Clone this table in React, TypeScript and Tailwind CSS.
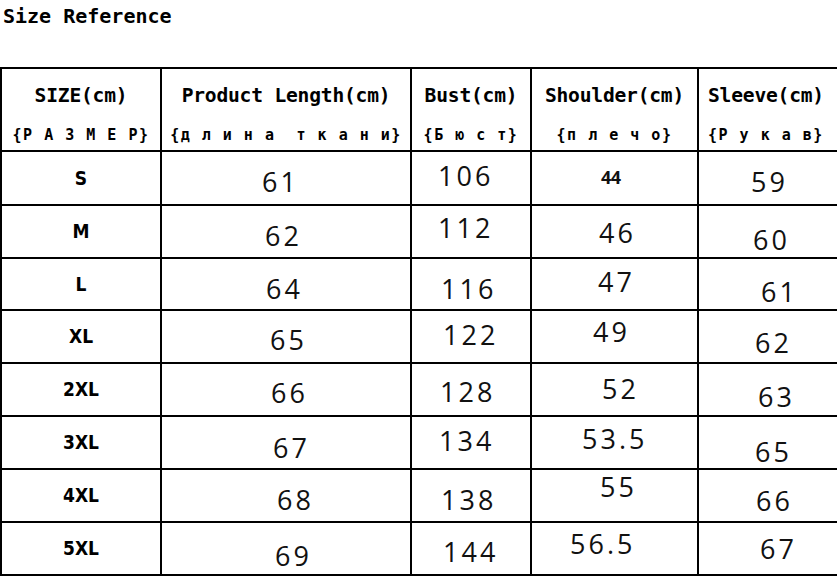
import React from "react";

type Cell = { t: string; c: string; small?: boolean };
type Row = { size: string; cells: Cell[] };

const rows: Row[] = [
  {
    size: "S",
    cells: [
      { t: "61", c: "pl-[100px] pt-[16px]" },
      { t: "106", c: "pl-[26px] pt-[10px]" },
      { t: "44", c: "pl-[69px] pt-[16px]", small: true },
      { t: "59", c: "pl-[52px] pt-[16px]" },
    ],
  },
  {
    size: "M",
    cells: [
      { t: "62", c: "pl-[103px] pt-[16px]" },
      { t: "112", c: "pl-[26px] pt-[8px]" },
      { t: "46", c: "pl-[67px] pt-[13px]" },
      { t: "60", c: "pl-[54px] pt-[20px]" },
    ],
  },
  {
    size: "L",
    cells: [
      { t: "64", c: "pl-[104px] pt-[16px]" },
      { t: "116", c: "pl-[29px] pt-[16px]" },
      { t: "47", c: "pl-[66px] pt-[9px]" },
      { t: "61", c: "pl-[62px] pt-[19px]" },
    ],
  },
  {
    size: "XL",
    cells: [
      { t: "65", c: "pl-[108px] pt-[15px]" },
      { t: "122", c: "pl-[31px] pt-[10px]" },
      { t: "49", c: "pl-[61px] pt-[7px]" },
      { t: "62", c: "pl-[56px] pt-[18px]" },
    ],
  },
  {
    size: "2XL",
    cells: [
      { t: "66", c: "pl-[109px] pt-[15px]" },
      { t: "128", c: "pl-[28px] pt-[14px]" },
      { t: "52", c: "pl-[70px] pt-[11px]" },
      { t: "63", c: "pl-[59px] pt-[19px]" },
    ],
  },
  {
    size: "3XL",
    cells: [
      { t: "67", c: "pl-[111px] pt-[17px]" },
      { t: "134", c: "pl-[27px] pt-[10px]" },
      { t: "53.5", c: "pl-[50px] pt-[8px]" },
      { t: "65", c: "pl-[56px] pt-[21px]" },
    ],
  },
  {
    size: "4XL",
    cells: [
      { t: "68", c: "pl-[115px] pt-[16px]" },
      { t: "138", c: "pl-[29px] pt-[16px]" },
      { t: "55", c: "pl-[68px] pt-[3px]" },
      { t: "66", c: "pl-[57px] pt-[17px]" },
    ],
  },
  {
    size: "5XL",
    cells: [
      { t: "69", c: "pl-[113px] pt-[19px]" },
      { t: "144", c: "pl-[31px] pt-[15px]" },
      { t: "56.5", c: "pl-[38px] pt-[7px]" },
      { t: "67", c: "pl-[61px] pt-[12px]" },
    ],
  },
];

const headers = [
  { top: "SIZE(cm)", bottom: "{Р А З М Е Р}", align: "text-center" },
  { top: "Product Length(cm)", bottom: "{д л и н а  т к а н и}", align: "text-center" },
  { top: "Bust(cm)", bottom: "{Б ю с т}", align: "text-center" },
  { top: "Shoulder(cm)", bottom: "{п л е ч о}", align: "text-center" },
  { top: "Sleeve(cm)", bottom: "{Р у к а в}", align: "text-left pl-[9px]" },
];

const cellBorder = "border-r-2 border-b-2 border-black";

export default function App() {
  return (
    <div className="w-[837px] h-[578px] overflow-hidden bg-white text-black">
      <div className="h-[67px] pl-[3px] pt-[6px]">
        <div className="font-['DejaVu_Sans_Mono',monospace] font-bold text-[20px] leading-none whitespace-pre">
          Size Reference
        </div>
      </div>
      <div className="grid w-max grid-cols-[160px_250px_120px_167px_143px] grid-rows-[83px_54px_53px_52px_53px_53px_53px_53px_53px] border-t-2 border-l-2 border-black">
        {headers.map((h, i) => (
          <div key={i} className={`${cellBorder} ${h.align} pt-[17px]`}>
            <div className="font-['DejaVu_Sans_Mono',monospace] font-bold text-[19.6px] leading-none tracking-[-0.2px] whitespace-pre">
              {h.top}
            </div>
            <div className="mt-[22px] font-['DejaVu_Sans_Mono',monospace] font-bold text-[15px] leading-none tracking-[1.5px] whitespace-pre">
              {h.bottom}
            </div>
          </div>
        ))}
        {rows.map((r) => (
          <React.Fragment key={r.size}>
            <div className={`${cellBorder} flex items-center justify-center`}>
              <span className="font-['DejaVu_Sans_Condensed','DejaVu_Sans',sans-serif] font-bold text-[19px] leading-none">
                {r.size}
              </span>
            </div>
            {r.cells.map((c, j) => (
              <div key={j} className={`${cellBorder} ${c.c}`}>
                {c.small ? (
                  <span className="block font-['Open_Sans',sans-serif] font-bold text-[18px] leading-none tracking-[-0.5px] text-[#111]">
                    {c.t}
                  </span>
                ) : (
                  <span className="block font-['Open_Sans',sans-serif] text-[27px] leading-none tracking-[3px] text-[#111]">
                    {c.t}
                  </span>
                )}
              </div>
            ))}
          </React.Fragment>
        ))}
      </div>
    </div>
  );
}
